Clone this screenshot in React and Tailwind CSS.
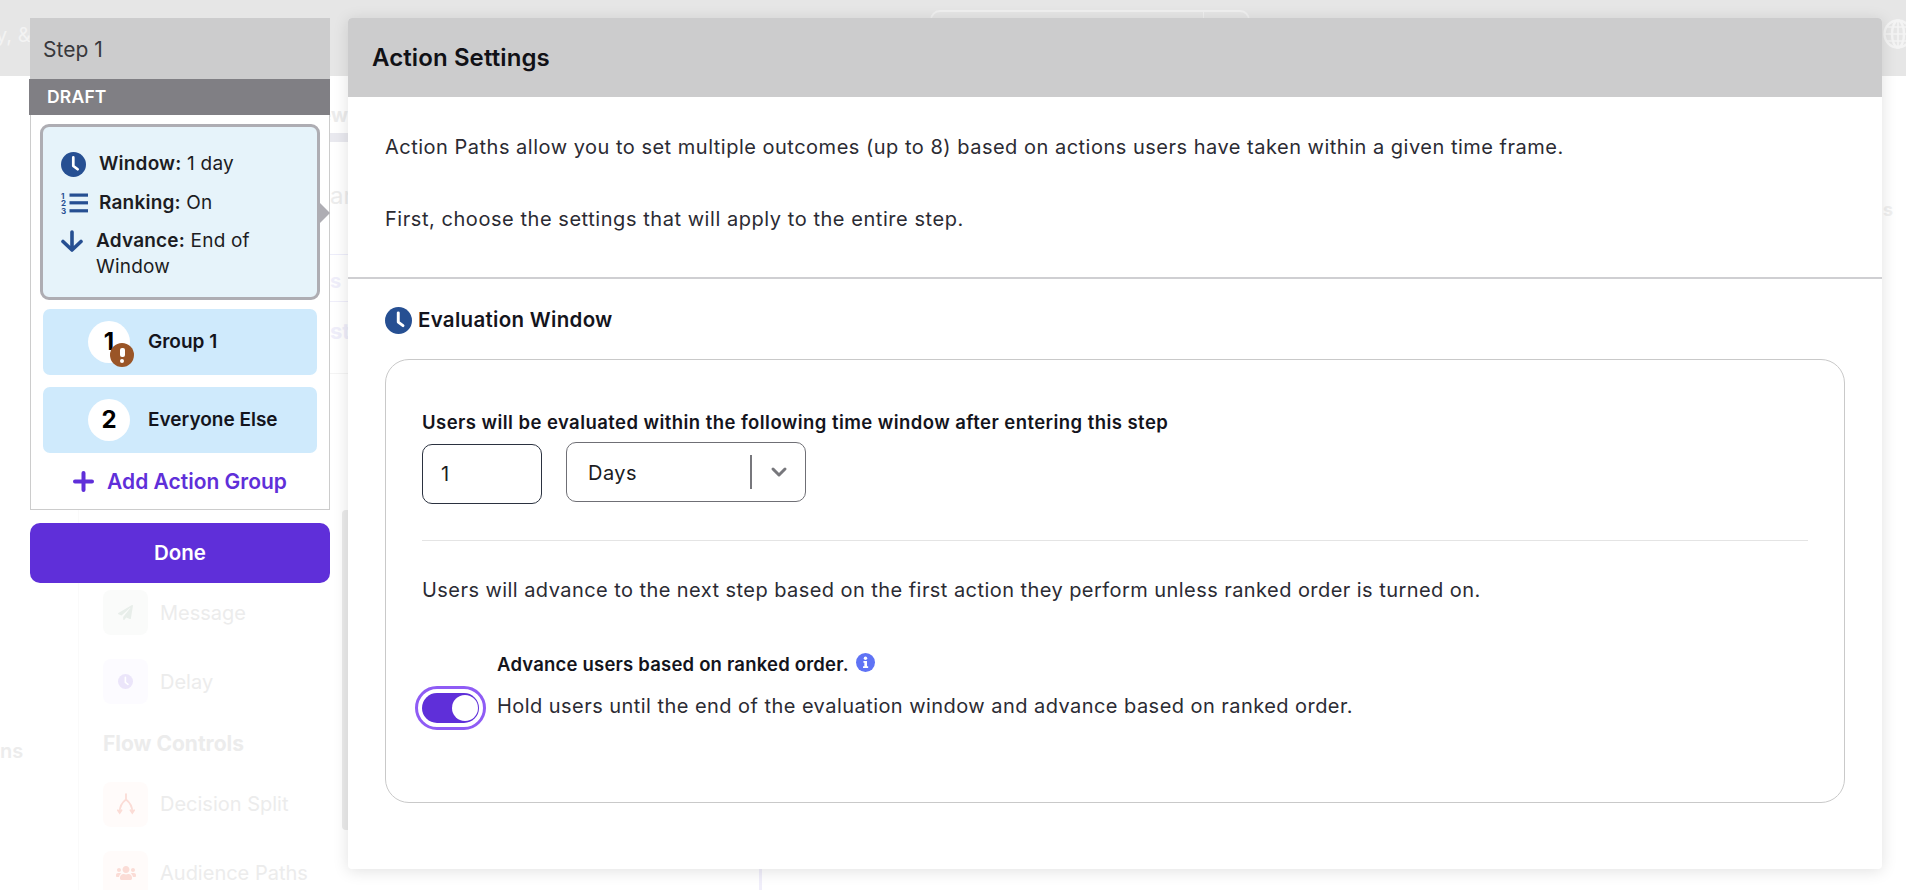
import React from 'react';
import { ChevronDown } from 'lucide-react';
import { FaPaperPlane, FaUsers } from 'react-icons/fa';

const FONT = { fontFamily: 'Inter, "Noto Sans", sans-serif' };

const ClockIcon = ({ className, color = '#264f92' }) => (
    <svg viewBox="0 0 24 24" className={className}>
        <circle cx="12" cy="12" r="12" fill={color} />
        <path d="M11.8 5.2 V13.4 L16 16.6" fill="none" stroke="#fff" strokeWidth="2.6" strokeLinecap="round" strokeLinejoin="round" />
    </svg>
);

const RankIcon = () => (
    <svg viewBox="0 0 27 22" className="w-[27px] h-[22px] shrink-0">
        <rect x="8.5" y="1.5" width="18.5" height="3.2" fill="#264f92" />
        <rect x="8.5" y="9.2" width="18.5" height="3.2" fill="#264f92" />
        <rect x="8.5" y="17.2" width="18.5" height="3.2" fill="#264f92" />
        <text x="0" y="6.5" fontSize="8" fontWeight="700" fill="#264f92">1</text>
        <text x="0" y="14" fontSize="8" fontWeight="700" fill="#264f92">2</text>
        <text x="0" y="21.5" fontSize="8" fontWeight="700" fill="#264f92">3</text>
    </svg>
);

const GroupRow = ({ num, label, warn }) => (
    <div className="flex items-center h-[66px] rounded-[7px] bg-[#cfeafc] pl-[45px]">
        <div className="relative w-[42px] h-[42px] rounded-full bg-white flex items-center justify-center text-[24px] font-bold text-black">
            {num}
            {warn && (
                <span className="absolute left-[22px] top-[22px] w-[24px] h-[24px] rounded-full bg-[#9a5527] flex flex-col items-center justify-center gap-[2px]">
                    <span className="w-[5px] h-[9px] rounded-[2px] bg-white" />
                    <span className="w-[4px] h-[4px] rounded-full bg-white" />
                </span>
            )}
        </div>
        <span className="ml-[18px] pt-[1px] text-[19px] font-semibold text-[#14141c]">{label}</span>
    </div>
);

const FadedItem = ({ icon, label, tint }) => (
    <div className="flex items-center gap-[12px] h-[45px]">
        <div className={`w-[45px] h-[45px] rounded-[8px] flex items-center justify-center ${tint}`}>{icon}</div>
        <span className="text-[20px] text-[#ececec]">{label}</span>
    </div>
);

const Background = () => (
    <div className="absolute inset-0 overflow-hidden bg-white">
        <div className="relative h-[76px] bg-[#e6e6e6] flex items-start">
            <span className="mt-[20px] -ml-[4px] text-[20px] text-[#f3f3f3]">y, &amp;</span>
            <div className="ml-[899px] mt-[10px] w-[320px] h-[40px] rounded-[10px] border-2 border-[#f0f0f0] flex justify-end">
                <div className="w-[45px] border-l border-[#f0f0f0]" />
            </div>
            <svg viewBox="0 0 30 30" fill="none" stroke="#f4f4f4" strokeWidth="2.4" className="absolute left-[1883px] top-[19px] w-[30px] h-[30px]">
                <circle cx="15" cy="15" r="13.5" />
                <ellipse cx="15" cy="15" rx="6" ry="13.5" />
                <path d="M2 15 H28 M4 8 H26 M4 22 H26 M15 2 V28" strokeWidth="1.6" />
            </svg>
        </div>
        <div className="flex h-[814px]">
            <div className="w-[79px] border-r border-[#fafafa] pt-[660px] overflow-hidden">
                <span className="text-[20px] font-semibold text-[#ececec]">ns</span>
            </div>
            <div className="w-[263px] pl-[24px] pt-[514px] flex flex-col">
                <FadedItem tint="bg-[#fafbfa]" label="Message" icon={<FaPaperPlane size={15} className="text-[#e8eeea]" />} />
                <div className="mt-[24px]">
                    <FadedItem tint="bg-[#fcfbff]" label="Delay" icon={<ClockIcon className="w-[15px] h-[15px]" color="#ebe5fa" />} />
                </div>
                <span className="mt-[24px] text-[21px] font-bold text-[#ececec]">Flow Controls</span>
                <div className="mt-[22px]">
                    <FadedItem tint="bg-[#fffbfa]" label="Decision Split" icon={
                        <svg viewBox="0 0 20 24" fill="none" stroke="#fbdcd6" strokeWidth="2" strokeLinecap="round" className="w-[18px] h-[22px]">
                            <path d="M10 1 V7 C6 10 3 14 3 21 M10 7 C14 10 17 14 17 21" />
                            <path d="M1 19 L3 22 L5 19 M15 19 L17 22 L19 19" />
                        </svg>
                    } />
                </div>
                <div className="mt-[24px]">
                    <FadedItem tint="bg-[#fffbfa]" label="Audience Paths" icon={<FaUsers size={20} className="text-[#fbdcd6]" />} />
                </div>
            </div>
            <div className="w-[6px] h-[320px] mt-[434px] rounded-l-[4px] bg-[#ebebeb]" />
        </div>
        {/* pieces of the page that show in the gap between the two panels */}
        <div className="absolute left-[330px] top-[100px] w-[18px] h-[290px] overflow-hidden">
            <span className="absolute right-0 top-[0px] text-[20px] font-bold text-[#ececec] whitespace-nowrap">ew</span>
            <div className="absolute inset-x-0 top-[33px] h-[9px] bg-[#e9e9ef]" />
            <span className="absolute left-0 top-[78px] text-[24px] text-[#ececec] whitespace-nowrap">ar</span>
            <div className="absolute inset-x-0 top-[154px] h-px bg-[#ededfa]" />
            <span className="absolute left-0 top-[166px] text-[20px] font-bold text-[#efeefa] whitespace-nowrap">s</span>
            <div className="absolute inset-x-0 top-[201px] h-px bg-[#efeefa]" />
            <span className="absolute left-0 top-[215px] text-[22px] font-bold text-[#efeefa] whitespace-nowrap">st</span>
            <div className="absolute inset-x-0 top-[273px] h-px bg-[#f4f4f4]" />
        </div>
        <div className="absolute left-[1883px] top-[196px] text-[18px] font-bold text-[#f0f0f0]">s</div>
        <div className="absolute left-[759px] top-[869px] w-[3px] h-[21px] bg-[#f0eefa]" />
    </div>
);

const LeftPanel = () => (
    <div className="w-[300px] shrink-0">
        <div className="h-[61px] bg-[#cccccd] flex items-center pl-[13px] pt-[2px] text-[21px] text-[#38383c]">Step 1</div>
        <div className="h-[36px] -ml-[1px] bg-[#807f84] flex items-center pl-[18px] text-[17.5px] tracking-[0.2px] font-semibold text-white">DRAFT</div>
        <div className="relative h-[395px] bg-white border-x border-b border-[#cccccc] px-[9px] pt-[9px]">
            <div className="relative h-[176px] rounded-[9px] border-[3px] border-[#aeadb3] bg-[#e6f3fa] pl-[18px] pt-[24px] text-[19px] tracking-[0.2px] leading-[26px] text-[#1c1c22]">
                <div className="flex items-center gap-[13px]">
                    <ClockIcon className="w-[25px] h-[25px] shrink-0" />
                    <span><b className="font-semibold">Window:</b> 1 day</span>
                </div>
                <div className="flex items-center gap-[11px] mt-[13px]">
                    <RankIcon />
                    <span><b className="font-semibold">Ranking:</b> On</span>
                </div>
                <div className="flex items-start gap-[13px] mt-[12px]">
                    <svg viewBox="0 0 22 22" fill="none" stroke="#264f92" strokeWidth="3.6" strokeLinecap="round" strokeLinejoin="round" className="w-[22px] h-[22px] mt-[2px] shrink-0">
                        <path d="M11 2 V20 M2 11.5 L11 20 L20 11.5" />
                    </svg>
                    <span className="w-[200px]"><b className="font-semibold">Advance:</b> End of Window</span>
                </div>
                <div className="absolute -right-[13px] top-[76px] w-0 h-0 border-y-[10px] border-y-transparent border-l-[10px] border-l-[#aeadb3]" />
            </div>
            <div className="px-[3px] mt-[9px] flex flex-col gap-[12px]">
                <GroupRow num="1" label="Group 1" warn />
                <GroupRow num="2" label="Everyone Else" />
            </div>
            <div className="flex items-center justify-center gap-[13px] mt-[13px] text-[21px] font-semibold text-[#5f2fd9]">
                <svg viewBox="0 0 21 21" className="w-[21px] h-[21px]">
                    <path d="M10.5 2 V19 M2 10.5 H19" stroke="#5f2fd9" strokeWidth="4" strokeLinecap="round" />
                </svg>
                Add Action Group
            </div>
        </div>
        <button className="w-full h-[60px] mt-[13px] rounded-[10px] bg-[#5f2fd9] text-white text-[20.5px] font-semibold">Done</button>
    </div>
);

const ActionSettings = () => (
    <div className="w-[1534px] h-[851px] shrink-0 bg-white rounded-[4px] shadow-[0_2px_16px_rgba(0,0,0,0.12)] overflow-hidden text-[20px] tracking-[0.47px] text-[#2b2b33]">
        <div className="h-[79px] bg-[#cccccd] flex items-center pl-[24px] text-[24px] tracking-[0.1px] font-semibold text-[#111116]">Action Settings</div>
        <div className="px-[37px] pt-[37px] h-[182px] border-b-2 border-[#cfcfd2]">
            <p className="leading-[26px] tracking-[0.5px]">Action Paths allow you to set multiple outcomes (up to 8) based on actions users have taken within a given time frame.</p>
            <p className="leading-[26px] mt-[46px] tracking-[0.55px]">First, choose the settings that will apply to the entire step.</p>
        </div>
        <div className="px-[37px]">
            <div className="flex items-center gap-[6px] mt-[28px] h-[27px]">
                <ClockIcon className="w-[27px] h-[27px]" />
                <span className="text-[20.5px] tracking-[0.3px] font-semibold text-[#14141c]">Evaluation Window</span>
            </div>
            <div className="mt-[25px] w-[1460px] h-[444px] rounded-[24px] border border-[#c9c9c9] px-[36px] pt-[51px]">
                <div className="leading-[22px] text-[18.5px] tracking-[0.44px] font-semibold text-[#14141c]">Users will be evaluated within the following time window after entering this step</div>
                <div className="flex items-start gap-[24px] mt-[9px] h-[62px]">
                    <div className="mt-[2px] w-[120px] h-[60px] rounded-[10px] border border-[#2b3240] flex items-center pl-[18px] text-[#1c1c22]">1</div>
                    <div className="w-[240px] h-[60px] rounded-[10px] border border-[#6f6f75] flex items-center pl-[21px] text-[#1c1c22]">
                        <span className="w-[162px] pt-[1px]">Days</span>
                        <span className="w-[2px] h-[34px] bg-[#77777c]" />
                        <ChevronDown size={24} strokeWidth={3} className="ml-[15px] text-[#77777c]" />
                    </div>
                </div>
                <div className="mt-[36px] h-px bg-[#e4e4e4]" />
                <p className="mt-[36px] leading-[26px] tracking-[0.44px]">Users will advance to the next step based on the first action they perform unless ranked order is turned on.</p>
                <div className="flex items-end gap-[11px] mt-[49px]">
                    <div className="w-[71px] h-[44px] -ml-[7px] rounded-full border-[3px] border-[#8f5cf5] p-[4px] shrink-0 flex">
                        <div className="w-full h-full rounded-full bg-[#5f2fd9] flex justify-end items-center pr-[1px]">
                            <span className="w-[26px] h-[26px] rounded-full bg-white" />
                        </div>
                    </div>
                    <div className="pb-[11px]">
                        <div className="flex items-center gap-[7px] text-[18.5px] tracking-[0.2px] font-semibold text-[#14141c] leading-[24px]">
                            Advance users based on ranked order.
                            <svg viewBox="0 0 20 20" className="w-[19px] h-[19px] -mt-[4px]">
                                <circle cx="10" cy="10" r="10" fill="#5f73f5" />
                                <circle cx="10" cy="5.5" r="1.8" fill="#fff" />
                                <path d="M7.8 8.5 H11.6 V14 H12.8 V15.8 H7.4 V14 H8.8 V10.2 H7.8 Z" fill="#fff" />
                            </svg>
                        </div>
                        <p className="mt-[17px] leading-[26px] tracking-[0.45px]">Hold users until the end of the evaluation window and advance based on ranked order.</p>
                    </div>
                </div>
            </div>
        </div>
    </div>
);

export default function App() {
    return (
        <div className="relative w-[1906px] h-[890px] overflow-hidden" style={FONT}>
            <Background />
            <div className="relative flex items-start gap-[18px] pl-[30px] pt-[18px]">
                <LeftPanel />
                <ActionSettings />
            </div>
        </div>
    );
}
